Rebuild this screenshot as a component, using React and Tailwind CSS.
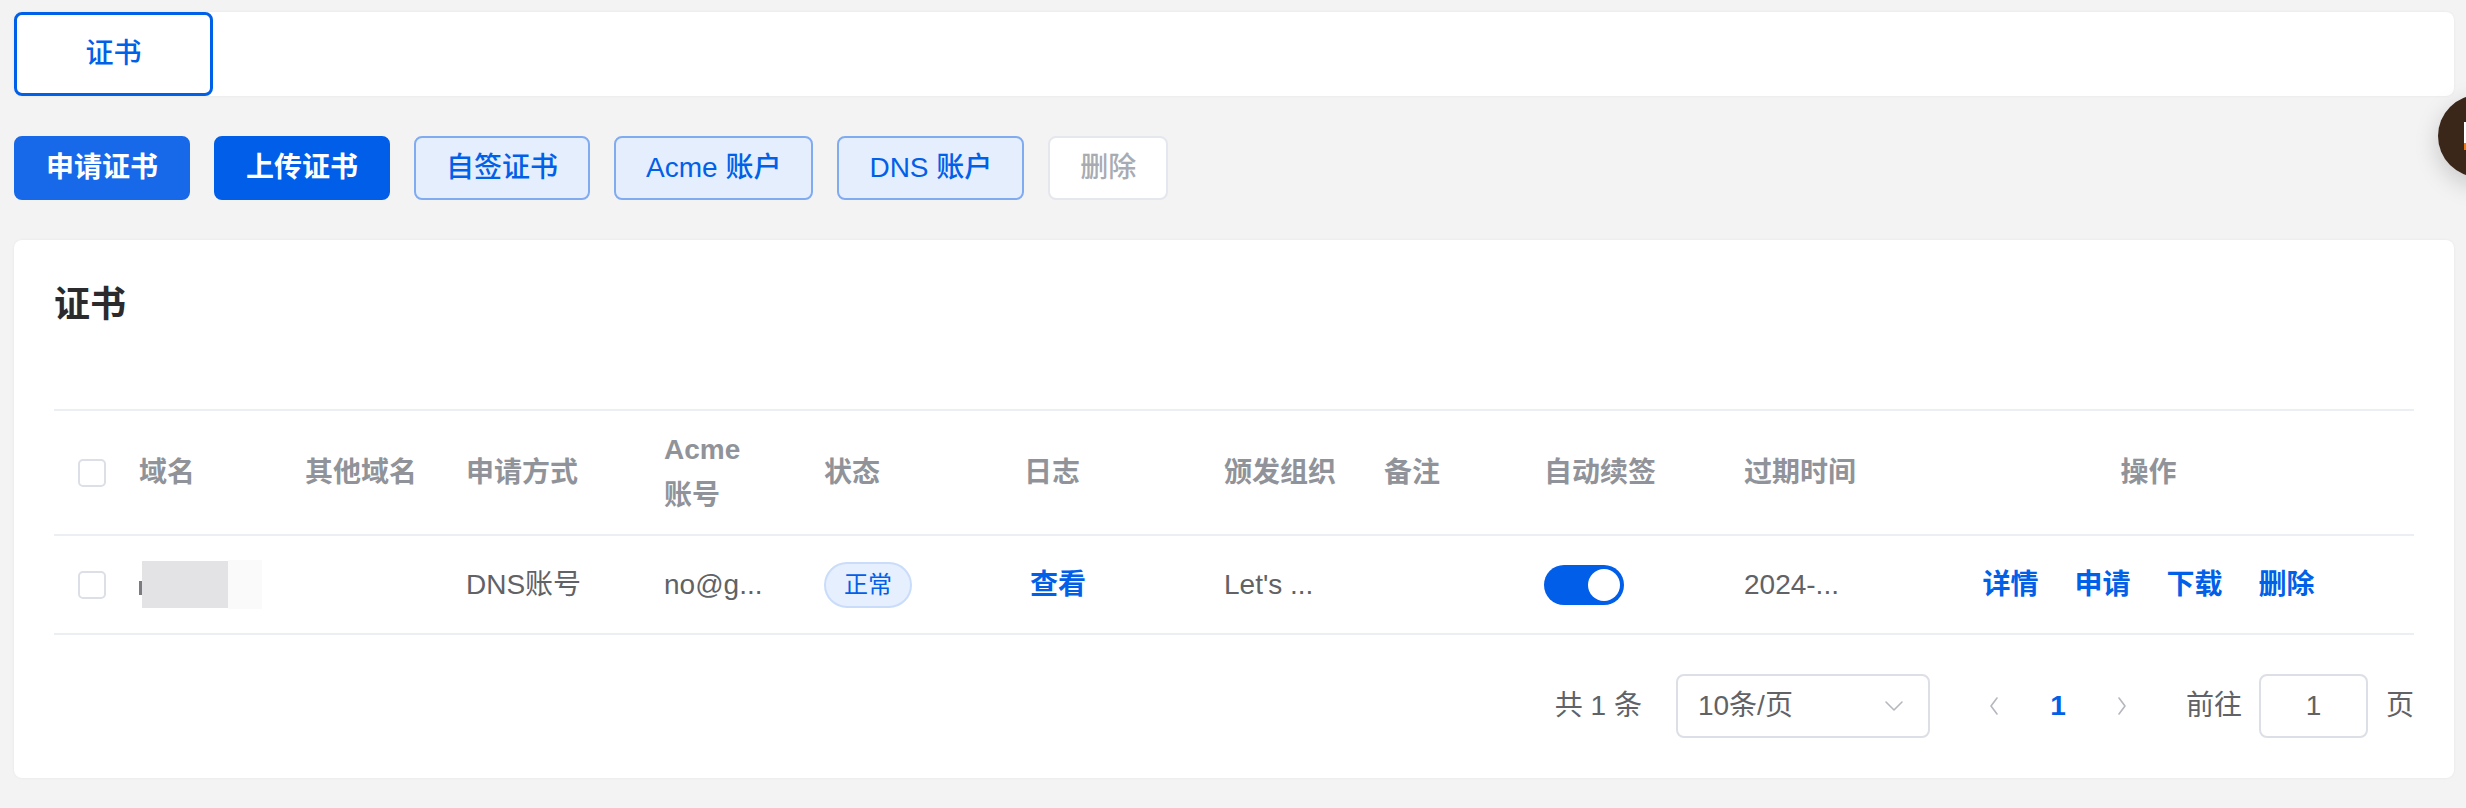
import React from "react";

const cols =
  "grid grid-cols-[61px_166px_161px_198px_160px_200px_200px_160px_160px_200px_163px_1fr]";

function Checkbox() {
  return <div className="w-[28px] h-[28px] border-2 border-[#dcdfe6] rounded-[5px] bg-white" />;
}

function Chevron({ dir }) {
  const d = dir === "left" ? "M9 2 L3 10 L9 18" : dir === "right" ? "M3 2 L9 10 L3 18" : "M2 3 L10 11 L18 3";
  const w = dir === "down" ? 20 : 12;
  const h = dir === "down" ? 14 : 20;
  return (
    <svg width={w} height={h} viewBox={`0 0 ${w} ${h}`} fill="none">
      <path d={d} stroke="#b4b7be" strokeWidth="1.6" strokeLinecap="round" strokeLinejoin="round" />
    </svg>
  );
}

export default function App() {
  const head = "px-[24px] flex items-center text-[28px] leading-[46px] font-semibold text-[#909399]";
  const cell = "px-[24px] flex items-center text-[28px] leading-[46px] text-[#606266] whitespace-nowrap";
  return (
    <div className="relative w-full h-[808px] overflow-hidden bg-[#f3f3f4] font-[family-name:'Liberation_Sans','Noto_Sans_CJK_SC',sans-serif]">
      <div className="pl-[14px] pr-[12px] pt-[12px]">
        {/* tab bar */}
        <div className="h-[84px] bg-white rounded-[8px] shadow-[0_0_3px_rgba(0,0,0,0.06)] flex">
          <div className="w-[199px] h-[84px] border-[3px] border-[#0060e8] rounded-[8px] flex items-center justify-center text-[28px] font-medium text-[#0060e8]">
            证书
          </div>
        </div>

        {/* buttons */}
        <div className="mt-[40px] flex gap-[24px] h-[64px]">
          <button className="h-[64px] px-[30px] rounded-[8px] bg-[#1769e9] border-2 border-[#1769e9] text-white text-[28px] font-semibold">申请证书</button>
          <button className="h-[64px] px-[30px] rounded-[8px] bg-[#005ee8] border-2 border-[#005ee8] text-white text-[28px] font-semibold">上传证书</button>
          <button className="h-[64px] px-[30px] rounded-[8px] bg-[#e5eefc] border-2 border-[#80abf1] text-[#0060e8] text-[28px] font-medium">自签证书</button>
          <button className="h-[64px] px-[30px] rounded-[8px] bg-[#e5eefc] border-2 border-[#80abf1] text-[#0060e8] text-[28px] font-medium">Acme 账户</button>
          <button className="h-[64px] px-[30px] rounded-[8px] bg-[#e5eefc] border-2 border-[#80abf1] text-[#0060e8] text-[28px] font-medium">DNS 账户</button>
          <button className="h-[64px] px-[30px] rounded-[8px] bg-white border-2 border-[#e4e7ed] text-[#a8abb2] text-[28px] font-medium">删除</button>
        </div>

        {/* main card */}
        <div className="mt-[40px] bg-white rounded-[8px] shadow-[0_0_3px_rgba(0,0,0,0.06)] p-[40px]">
          <div className="h-[50px] leading-[50px] text-[36px] font-semibold text-[#2b2b2e]">证书</div>

          <div className="mt-[79px] border-t-2 border-[#ebeef3]">
            <div className={`${cols} h-[125px] border-b-2 border-[#ebeef3]`}>
              <div className="pl-[24px] flex items-center"><Checkbox /></div>
              <div className={head}>域名</div>
              <div className={head}>其他域名</div>
              <div className={head}>申请方式</div>
              <div className={head}>Acme<br />账号</div>
              <div className={head}>状态</div>
              <div className={head}>日志</div>
              <div className={head}>颁发组织</div>
              <div className={head}>备注</div>
              <div className={head}>自动续签</div>
              <div className={head}>过期时间</div>
              <div className={`${head} justify-center`}>操作</div>
            </div>

            <div className={`${cols} h-[99px] border-b-2 border-[#ebeef3]`}>
              <div className="pl-[24px] flex items-center"><Checkbox /></div>
              <div className="pl-[24px] flex items-center">
                <div className="w-[3px] h-[14px] mt-[6px] bg-[#7a7c82]" />
                <div className="w-[86px] h-[47px] bg-[#e3e3e5]" />
                <div className="w-[34px] h-[49px] bg-[#fafafa]" />
              </div>
              <div className={cell}></div>
              <div className={cell}>DNS账号</div>
              <div className={cell}>no@g...</div>
              <div className="px-[24px] flex items-center">
                <span className="h-[46px] w-[88px] rounded-full bg-[#e6effd] border-2 border-[#c9dcfa] text-[#0060e8] text-[24px] flex items-center justify-center">正常</span>
              </div>
              <div className="pl-[30px] flex items-center text-[28px] font-semibold text-[#0060e8]">查看</div>
              <div className={cell}>Let's ...</div>
              <div className={cell}></div>
              <div className="px-[24px] flex items-center">
                <div className="w-[80px] h-[40px] rounded-full bg-[#005ee8] flex items-center justify-end pr-[4px]">
                  <div className="w-[32px] h-[32px] rounded-full bg-white" />
                </div>
              </div>
              <div className={cell}>2024-...</div>
              <div className="flex items-center justify-center gap-[36px] text-[28px] font-semibold text-[#0060e8]">
                <span>详情</span>
                <span>申请</span>
                <span>下载</span>
                <span>删除</span>
              </div>
            </div>
          </div>

          {/* pagination */}
          <div className="mt-[39px] h-[64px] flex items-center justify-end text-[28px] text-[#606266]">
            <span className="whitespace-pre">共 1 条</span>
            <div className="ml-[34px] w-[254px] h-[64px] border-2 border-[#dcdfe6] rounded-[8px] flex items-center justify-between pl-[20px] pr-[24px]">
              <span>10条/页</span>
              <Chevron dir="down" />
            </div>
            <div className="ml-[32px] w-[64px] h-[64px] flex items-center justify-center"><Chevron dir="left" /></div>
            <div className="w-[64px] h-[64px] flex items-center justify-center font-semibold text-[#0060e8]">1</div>
            <div className="w-[64px] h-[64px] flex items-center justify-center"><Chevron dir="right" /></div>
            <span className="ml-[32px]">前往</span>
            <div className="ml-[17px] w-[109px] h-[64px] border-2 border-[#dcdfe6] rounded-[8px] flex items-center justify-center">1</div>
            <span className="ml-[18px]">页</span>
          </div>
        </div>
      </div>

      {/* floating widget */}
      <div className="absolute left-[2438px] top-[95px] w-[82px] h-[82px] rounded-full bg-[#3b271a] shadow-[0_8px_24px_rgba(0,0,0,0.18)] overflow-hidden">
        <div className="absolute left-[26px] top-[27px] w-[10px] h-[21px] bg-white" />
        <div className="absolute left-[26px] top-[48px] w-[10px] h-[7px] bg-[#f07a12]" />
      </div>
    </div>
  );
}
